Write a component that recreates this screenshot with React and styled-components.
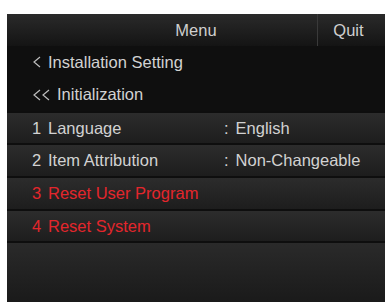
import React from "react";
import styled, { createGlobalStyle } from "styled-components";

const GlobalStyle = createGlobalStyle`
  html, body {
    margin: 0;
    padding: 0;
    background: #fff;
  }
  body {
    font-family: "Liberation Sans", Arial, sans-serif;
  }
`;

const Page = styled.div`
  padding: 14px 5px 4px 7px;
`;

const Panel = styled.div`
  width: 378px;
  height: 288px;
  display: flex;
  flex-direction: column;
  background: linear-gradient(#262626, #1a1a1a);
  color: #d2d2d2;
  font-size: 16.5px;
  overflow: hidden;
`;

const Header = styled.div`
  height: 32px;
  display: flex;
  background: linear-gradient(#2a2a2a, #141414);
`;

const Title = styled.div`
  flex: 1;
  display: flex;
  align-items: center;
  justify-content: center;
  padding-left: 68px;
  color: #cfcfcf;
`;

const QuitButton = styled.div`
  width: 68px;
  display: flex;
  align-items: center;
  justify-content: center;
  border-left: 1px solid #3a3a3a;
  color: #cfcfcf;
  padding-right: 6px;
  box-sizing: border-box;
`;

const Crumb = styled.div`
  height: ${(p) => p.h}px;
  display: flex;
  align-items: center;
  gap: ${(p) => p.gap}px;
  padding-left: 25px;
  background: #0f0f0f;
`;

const Chevron = styled.svg`
  display: block;
  flex-shrink: 0;
`;

const Row = styled.div`
  height: ${(p) => p.h}px;
  display: grid;
  grid-template-columns: 16px 176px 1fr;
  align-items: center;
  padding-left: 25px;
  box-sizing: border-box;
  border-top: 2px solid #0e0e0e;
  background: linear-gradient(#2c2c2c, #1d1d1d);
  color: ${(p) => (p.danger ? "#e3262c" : "#d2d2d2")};
`;

const Value = styled.span`
  display: flex;
  gap: 7px;
`;

const Filler = styled.div`
  flex: 1;
  border-top: 2px solid #0e0e0e;
  background: linear-gradient(#2a2a2a, #1a1a1a);
`;

function Back({ double }) {
  return (
    <Chevron width={double ? 20 : 10} height="14" viewBox={double ? "0 0 20 14" : "0 0 10 14"}>
      <polyline points="8,2 2,7 8,12" fill="none" stroke="#bdbdbd" strokeWidth="1.2" />
      {double && <polyline points="17,2 11,7 17,12" fill="none" stroke="#bdbdbd" strokeWidth="1.2" />}
    </Chevron>
  );
}

const items = [
  { n: 1, label: "Language", value: "English", h: 32 },
  { n: 2, label: "Item Attribution", value: "Non-Changeable", h: 33 },
  { n: 3, label: "Reset User Program", danger: true, h: 33 },
  { n: 4, label: "Reset System", danger: true, h: 32 },
];

export default function App() {
  return (
    <Page>
      <GlobalStyle />
      <Panel>
        <Header>
          <Title>Menu</Title>
          <QuitButton>Quit</QuitButton>
        </Header>
        <Crumb h={32} gap={6}>
          <Back />
          <span>Installation Setting</span>
        </Crumb>
        <Crumb h={33} gap={5}>
          <Back double />
          <span>Initialization</span>
        </Crumb>
        {items.map((it) => (
          <Row key={it.n} h={it.h} danger={it.danger}>
            <span>{it.n}</span>
            <span>{it.label}</span>
            {it.value && (
              <Value>
                <span>:</span>
                <span>{it.value}</span>
              </Value>
            )}
          </Row>
        ))}
        <Filler />
      </Panel>
    </Page>
  );
}
